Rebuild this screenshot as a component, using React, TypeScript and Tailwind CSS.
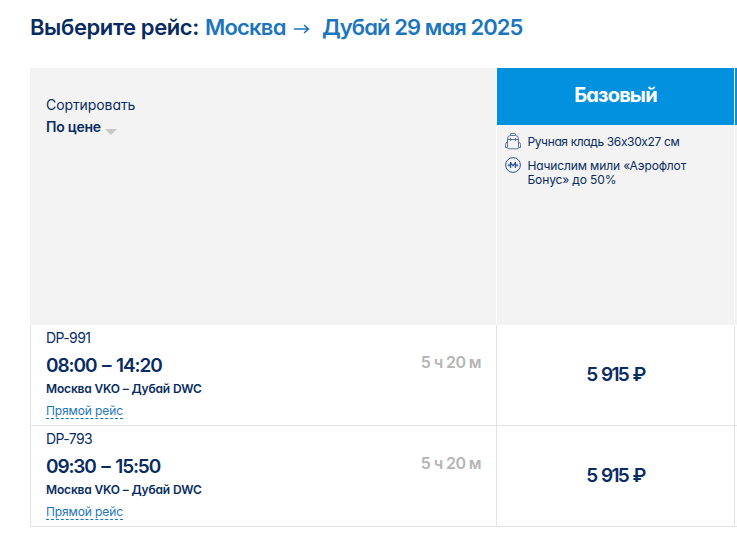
import type { ReactNode } from "react";

type Flight = { id: string; time: string; timeClass: string; idClass: string };

const flights: Flight[] = [
  { id: "DP-991", time: "08:00 – 14:20", timeClass: "tracking-[-1.1px]", idClass: "tracking-[-0.6px]" },
  { id: "DP-793", time: "09:30 – 15:50", timeClass: "tracking-[-1.15px]", idClass: "tracking-[-0.6px]" },
];

function BackpackIcon() {
  return (
    <svg width="16" height="17" viewBox="0 0 16 17" fill="none" stroke="#4a689a" strokeWidth="0.9">
      <path d="M5.5 2.5V1.2Q5.5.5 6.2.5H9.8Q10.5.5 10.5 1.2V2.5" />
      <path d="M2.5 14.5V6Q2.5 2.5 5.5 2.5H10.5Q13.5 2.5 13.5 6V14.5Q13.5 15.8 12 15.8H4Q2.5 15.8 2.5 14.5Z" />
      <path d="M3 6.5H13M5.5 5V8M10.5 5V8M2.5 9Q.5 9.5.5 11.5V14.5H2.5M13.5 9Q15.5 9.5 15.5 11.5V14.5H13.5" />
    </svg>
  );
}

function MilesIcon() {
  return (
    <svg width="16" height="16" viewBox="0 0 16 16" fill="none" stroke="#2c5190">
      <circle cx="8" cy="8" r="7.4" strokeWidth="1" />
      <path d="M5.6 5V11M10.4 5V11M5.6 5.6L8 8.8L10.4 5.6" strokeWidth="1.2" />
      <path d="M2.6 8.2H5.6M10.4 8.2H13.4M4 6.6V9.8M12 6.6V9.8" strokeWidth="0.8" />
    </svg>
  );
}

function Feature({ icon, children }: { icon: ReactNode; children: ReactNode }) {
  return (
    <li className="flex gap-[6.5px]">
      <span className="-mt-[2px] h-[17px] w-4 shrink-0">{icon}</span>
      <span className="whitespace-nowrap">{children}</span>
    </li>
  );
}

function FlightRow({ flight }: { flight: Flight }) {
  return (
    <div className="flex h-[101px] border-b border-[#e2e2e2]">
      <div className="flex w-[467px] justify-between border-x border-[#e2e2e2] pr-[15px] pl-[15px]">
        <div className="flex flex-col items-start pt-[3px] whitespace-nowrap">
          <div className={`text-sm leading-5 ${flight.idClass}`}>{flight.id}</div>
          <div className={`mt-[4px] text-[19px] leading-7 font-semibold [word-spacing:2px] ${flight.timeClass}`}>{flight.time}</div>
          <div className="mt-px text-xs leading-4 font-semibold tracking-[-0.16px]">Москва VKO – Дубай DWC</div>
          <a className="mt-[6px] border-b border-dashed border-[#1d76bd] text-xs leading-[15px] tracking-[-0.1px] text-[#1d76bd]">Прямой рейс</a>
        </div>
        <div className="pt-[25px] text-base leading-6 font-semibold tracking-[-0.6px] whitespace-nowrap text-[#b5b5b5]">5 ч 20 м</div>
      </div>
      <div className="w-[238px] border-r border-[#e2e2e2] pt-[36px] text-center text-[19px] leading-7 font-semibold tracking-[-1.6px] [word-spacing:1.2px]">
        5 915 ₽
      </div>
      <div className="flex-1" />
    </div>
  );
}

export default function App() {
  return (
    <main className="h-[536px] w-[737px] overflow-hidden bg-white pl-[30px] font-['Inter','Liberation_Sans',sans-serif] text-[#082c61] [font-feature-settings:'cv11']">
      <h1 className="flex h-[68px] pt-[13px] text-[22px] leading-7 font-semibold whitespace-nowrap">
        <span className="w-[175px] tracking-[-0.38px]">Выберите рейс:</span>
        <span className="w-[88px] tracking-[-0.8px] text-[#1d76bd]">Москва</span>
        <svg className="mt-[9px] mr-[12px]" width="17" height="14" viewBox="0 0 17 14" fill="none" stroke="#1d76bd" strokeWidth="1.6">
          <path d="M1 7H15.5M11 3L15.5 7L11 11" />
        </svg>
        <span className="tracking-[-0.92px] text-[#1d76bd]">Дубай 29 мая 2025</span>
      </h1>
      <section className="flex h-[257px] gap-px">
        <div className="w-[466px] bg-[#f3f3f3] pt-[26px] pl-[16px] text-sm leading-[22px]">
          <div className="tracking-[-0.08px]">Сортировать</div>
          <div className="flex font-semibold">
            <span className="tracking-[-0.25px]">По цене</span>
            <svg className="mt-[13px] ml-[4px]" width="12" height="6" viewBox="0 0 12 6" fill="#c8c8c8">
              <path d="M0 0H12L6 6Z" />
            </svg>
          </div>
        </div>
        <div className="w-[237px] bg-[#f3f3f3]">
          <div className="h-[57px] bg-[#0291df] pt-[13px] text-center text-xl leading-7 font-bold tracking-[-0.8px] text-white">Базовый</div>
          <ul className="flex flex-col gap-[9px] pt-[10px] pl-2 text-xs leading-[14px]">
            <Feature icon={<BackpackIcon />}>
              <span className="tracking-[-0.37px]">Ручная кладь 36х30х27 см</span>
            </Feature>
            <Feature icon={<MilesIcon />}>
              <span className="tracking-[-0.13px]">
                Начислим мили «Аэрофлот
                <br />
                Бонус» до 50%
              </span>
            </Feature>
          </ul>
        </div>
        <div className="flex-1 bg-[#f3f3f3]">
          <div className="h-[57px] bg-[#0291df]" />
        </div>
      </section>
      <section>
        {flights.map((flight) => (
          <FlightRow key={flight.id} flight={flight} />
        ))}
      </section>
    </main>
  );
}
